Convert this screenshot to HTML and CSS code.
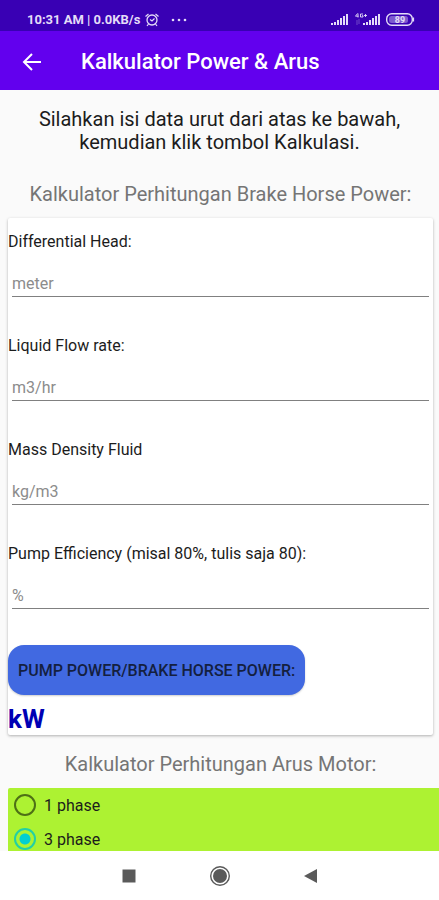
FILE: index.html
```
<!DOCTYPE html>
<html lang="id">
<head>
    <meta charset="UTF-8">
    <meta name="viewport" content="width=device-width, initial-scale=1.0">
    <title>Kalkulator Power &amp; Arus</title>
    <link rel="stylesheet" href="styles.css">
</head>
<body>
    <div class="status-bar">
        <span class="clock">10:31 AM | 0.0KB/s</span>
        <svg class="alarm" width="16" height="16" viewBox="0 0 16 16" fill="none" stroke="currentColor">
            <circle cx="8" cy="8" r="5" stroke-width="1.3"/>
            <path d="M1.5 4.5 4.5 2M14.5 4.5 11.5 2M4.5 12 3 14M11.5 12 13 14M6 7.5 8 9l2.500-2.500" stroke-width="1.2"/>
        </svg>
        <svg class="dots" width="16" height="4" viewBox="0 0 16 4" fill="currentColor">
            <circle cx="2" cy="2" r="1.3"/><circle cx="8" cy="2" r="1.3"/><circle cx="14" cy="2" r="1.3"/>
        </svg>
        <div class="status-right">
            <svg width="18" height="13" viewBox="0 0 18 13" fill="currentColor">
                <path d="M0 10h2v2H0zM3 9h2v3H3zM6 7h2v5H6zM9 5h2v7H9zM12 3h2v9h-2zM15 1h2v11h-2z"/>
            </svg>
            <svg width="25" height="13" viewBox="0 0 25 13" fill="currentColor">
                <path d="M8 10h2v2H8zM11 9h2v3h-2zM14 7h2v5h-2zM17 5h2v7h-2zM20 3h2v9h-2zM23 1h2v11h-2z"/>
                <path d="M3 .5v4M.5 3.200h3M.5 3.200 2.500.5M8 1H5.500v3H8V2.700H7M9 2.500h3M10.500 1v3" fill="none" stroke="currentColor" stroke-width=".9"/>
                <path d="M2 7v5M4 6v5" stroke="currentColor" stroke-width=".8" opacity=".4"/>
            </svg>
            <svg class="battery" width="29" height="13" viewBox="0 0 29 13">
                <rect x=".7" y=".7" width="25.600" height="11.600" rx="5" fill="none" stroke="currentColor" stroke-width="1.4"/>
                <rect x="3" y="3" width="19" height="7" rx="2.500" fill="currentColor" opacity=".4"/>
                <path d="M27.500 4.500v4" stroke="currentColor" stroke-width="1.2"/>
                <text x="14" y="10" text-anchor="middle" fill="currentColor">89</text>
            </svg>
        </div>
    </div>
    <header class="app-bar">
        <button type="button" class="back-button" aria-label="Kembali">
            <svg width="20" height="20" viewBox="0 0 20 20" fill="none" stroke="currentColor" stroke-width="2">
                <path d="M19 10H3M10 2 2 10l8 8"/>
            </svg>
        </button>
        <h1>Kalkulator Power &amp; Arus</h1>
    </header>
    <main class="content">
        <p class="intro">Silahkan isi data urut dari atas ke bawah, kemudian klik tombol Kalkulasi.</p>
        <h2>Kalkulator Perhitungan Brake Horse Power:</h2>
        <form class="card">
            <div class="field">
                <label for="head">Differential Head:</label>
                <input type="text" id="head" name="head" placeholder="meter">
            </div>
            <div class="field">
                <label for="flow">Liquid Flow rate:</label>
                <input type="text" id="flow" name="flow" placeholder="m3/hr">
            </div>
            <div class="field">
                <label for="density">Mass Density Fluid</label>
                <input type="text" id="density" name="density" placeholder="kg/m3">
            </div>
            <div class="field">
                <label for="efficiency">Pump Efficiency (misal 80%, tulis saja 80):</label>
                <input type="text" id="efficiency" name="efficiency" placeholder="%">
            </div>
            <button type="button" class="calc-button">PUMP POWER/BRAKE HORSE POWER:</button>
            <output class="result">kW</output>
        </form>
        <h2>Kalkulator Perhitungan Arus Motor:</h2>
        <div class="phase-group" role="radiogroup" aria-label="Phase">
            <label><input type="radio" name="phase" value="1">1 phase</label>
            <label><input type="radio" name="phase" value="3" checked>3 phase</label>
        </div>
    </main>
    <nav class="nav-bar">
        <button type="button" aria-label="Recent">
            <svg width="22" height="22" viewBox="0 0 22 22"><path d="M4.500 4.500h13v13h-13z" fill="currentColor"/></svg>
        </button>
        <button type="button" aria-label="Home">
            <svg width="22" height="22" viewBox="0 0 22 22">
                <circle cx="11" cy="11" r="9.300" fill="none" stroke="currentColor" stroke-width="1.4"/>
                <circle cx="11" cy="11" r="7" fill="currentColor"/>
            </svg>
        </button>
        <button type="button" aria-label="Back">
            <svg width="22" height="22" viewBox="0 0 22 22"><path d="M4 11 17 4v14z" fill="currentColor"/></svg>
        </button>
    </nav>
</body>
</html>
```
FILE: styles.css
```
* {
    box-sizing: border-box;
}

body {
    font-family: Roboto, sans-serif;
    margin: 0;
    height: 100vh;
    display: flex;
    flex-direction: column;
    background-color: #fafafa;
    color: #1c1c1c;
}

button {
    font-family: inherit;
    border: none;
    padding: 0;
    background: none;
    color: inherit;
    cursor: pointer;
}

svg {
    display: block;
}

.status-bar {
    flex: none;
    display: flex;
    align-items: center;
    height: 31px;
    padding: 8px 24px 0 27px;
    background-color: #3900b4;
    color: #e4dcf8;
}

.clock {
    font-size: 13px;
    font-weight: bold;
}

.alarm {
    margin-left: 4px;
}

.dots {
    margin-left: 11px;
}

.status-right {
    display: flex;
    align-items: center;
    gap: 6px;
    margin-left: auto;
}

.battery text {
    font-size: 9px;
    font-weight: bold;
}

.app-bar {
    flex: none;
    display: flex;
    align-items: center;
    gap: 39px;
    height: 59px;
    padding: 2px 22px 0;
    background-color: #6200ee;
    color: #fff;
}

.app-bar h1 {
    margin: 0;
    font-size: 22px;
    font-weight: 500;
}

.content {
    flex: 1;
    min-height: 0;
    overflow-y: auto;
    scrollbar-width: none;
    padding: 18px 0 0 8px;
}

.intro {
    margin: 0 30px 28px 22px;
    font-size: 20px;
    line-height: 23px;
    text-align: center;
}

h2 {
    margin: 0 6px 12px 0;
    font-size: 20px;
    font-weight: 400;
    line-height: 24px;
    text-align: center;
    color: #757575;
}

.card {
    margin: 0 6px 17px 0;
    padding: 15px 0 2px;
    background-color: #fff;
    border-radius: 2px;
    box-shadow: 0 1px 3px rgba(0, 0, 0, 0.3);
}

.field {
    margin-bottom: 40px;
}

.field:last-of-type {
    margin-bottom: 36px;
}

.field label {
    display: block;
    margin-bottom: 19px;
    font-size: 16px;
    line-height: 18px;
}

.field input {
    display: block;
    width: calc(100% - 8px);
    height: 27px;
    margin: 0 4px;
    padding: 0;
    border: none;
    border-bottom: 1px solid #808080;
    border-radius: 0;
    background: none;
    font-family: inherit;
    font-size: 16px;
    color: inherit;
    outline: none;
}

.field input::placeholder {
    color: #8c8c8c;
    opacity: 1;
}

.calc-button {
    display: block;
    height: 50px;
    padding: 0 10px;
    border-radius: 16px;
    background-color: #4169e1;
    color: #14203f;
    font-size: 16px;
    font-weight: 500;
    box-shadow: 0 1px 2px rgba(0, 0, 0, 0.2);
}

.result {
    display: block;
    margin-top: 10px;
    font-size: 26px;
    font-weight: bold;
    line-height: 28px;
    color: #0000b4;
}

.phase-group {
    border-radius: 2px 0 0 2px;
    background-color: #adf232;
}

.phase-group label {
    display: flex;
    align-items: center;
    gap: 8px;
    height: 34px;
    padding-left: 6px;
    font-size: 16px;
}

.phase-group input {
    appearance: none;
    width: 22px;
    height: 22px;
    margin: 0;
    border: 2px solid #4e7016;
    border-radius: 50%;
}

.phase-group input:checked {
    border-color: #22d0a4;
    background: radial-gradient(circle, #03cfd0 5px, transparent 6px);
}

.nav-bar {
    flex: none;
    display: flex;
    justify-content: center;
    align-items: center;
    gap: 69px;
    height: 49px;
    background-color: #fff;
    color: #5a5a5a;
}
```
